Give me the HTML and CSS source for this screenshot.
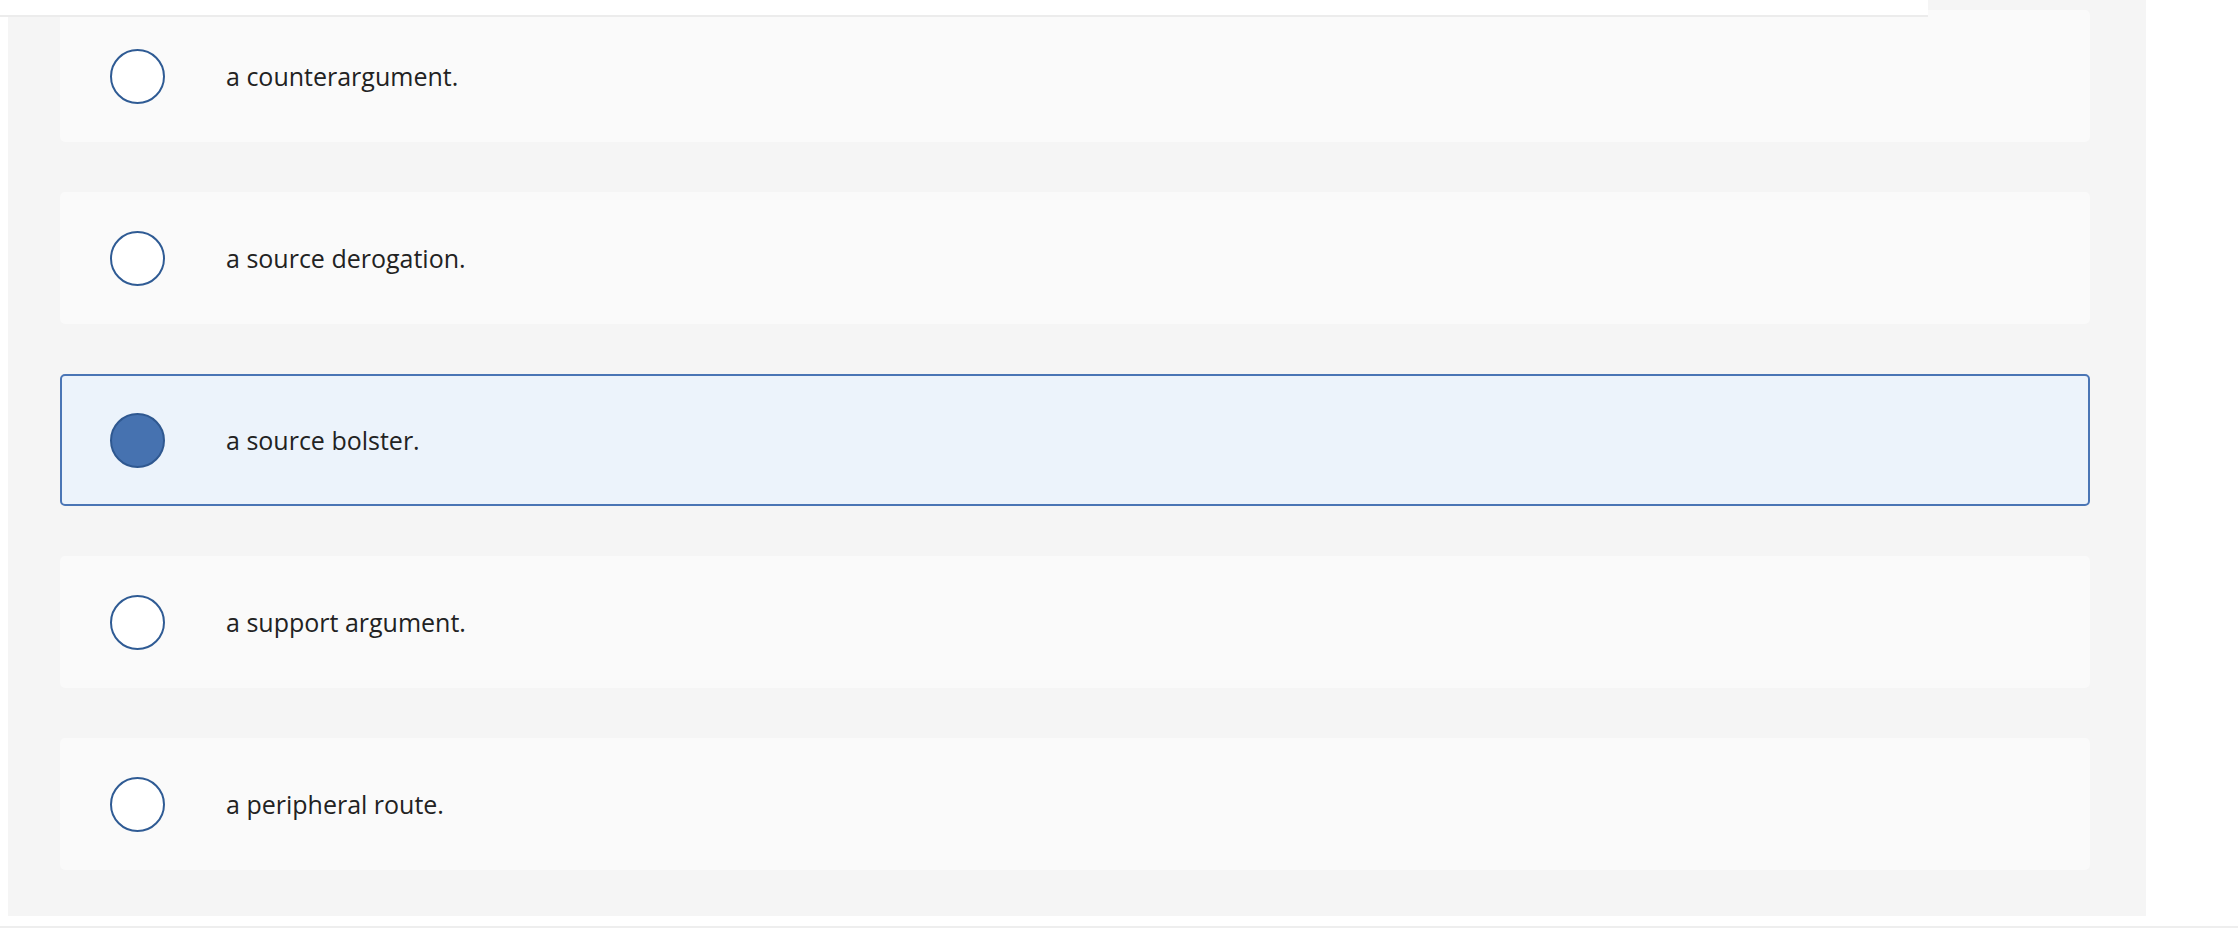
FILE: index.html
```html
<!DOCTYPE html>
<html lang="en">
<head>
  <meta charset="UTF-8" />
  <meta name="viewport" content="width=device-width, initial-scale=1.0"/>
  <title>Question choices</title>
  <link rel="stylesheet" href="styles.css">
</head>
<body>

  <div class="top-strip"></div>

  <div class="choices-panel">
    <div class="choice">
      <span class="radio"></span>
      <span class="choice-text">a counterargument.</span>
    </div>
    <div class="choice">
      <span class="radio"></span>
      <span class="choice-text">a source derogation.</span>
    </div>
    <div class="choice selected">
      <span class="radio"></span>
      <span class="choice-text">a source bolster.</span>
    </div>
    <div class="choice">
      <span class="radio"></span>
      <span class="choice-text">a support argument.</span>
    </div>
    <div class="choice">
      <span class="radio"></span>
      <span class="choice-text">a peripheral route.</span>
    </div>
  </div>

  <div class="bottom-rule"></div>

</body>
</html>
```

FILE: styles.css
```css
body {
  margin: 0;
  background: #fff;
  font-family: "Open Sans", Arial, sans-serif;
  position: relative;
}

.top-strip {
  position: absolute;
  top: 0;
  left: 0;
  width: 1928px;
  height: 15px;
  background: #fff;
  border-bottom: 2px solid #ececec;
  z-index: 2;
}

.choices-panel {
  margin-left: 8px;
  width: 2138px;
  box-sizing: border-box;
  padding: 10px 56px 46px 52px;
  background: #f5f5f5;
  display: flex;
  flex-direction: column;
  gap: 50px;
}

.choice {
  height: 132px;
  box-sizing: border-box;
  background: #fafafa;
  border-radius: 5px;
  display: flex;
  align-items: center;
  padding-left: 50px;
}

.radio {
  width: 55px;
  height: 55px;
  box-sizing: border-box;
  border: 2px solid #2f5b94;
  border-radius: 50%;
  background: #fff;
  flex-shrink: 0;
}

.choice-text {
  margin-left: 61px;
  font-size: 25px;
  color: #222;
}

.choice.selected {
  background: #ecf3fb;
  border: 2px solid #4a75b5;
  padding-left: 48px;
}

.choice.selected .radio {
  background: #4672b0;
  border-color: #2f5890;
}

.bottom-rule {
  margin-top: 10px;
  height: 2px;
  background: #eeeeee;
}
```
